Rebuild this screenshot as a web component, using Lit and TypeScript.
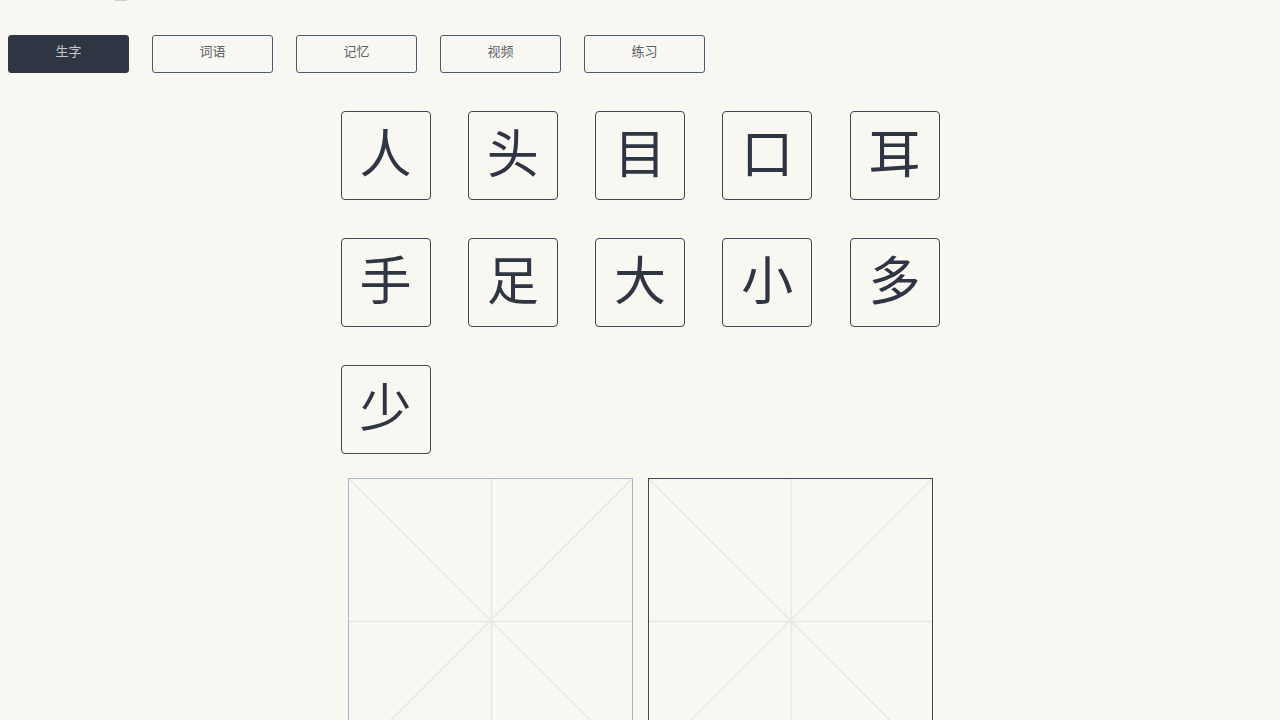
import { LitElement, html, css, svg } from "lit";
import { customElement, property, state } from "lit/decorators.js";
import { classMap } from "lit/directives/class-map.js";

const TABS = ["生字", "词语", "记忆", "视频", "练习"];
const CHARACTERS = ["人", "头", "目", "口", "耳", "手", "足", "大", "小", "多", "少"];

// Square practice sheet with a cross and two diagonals.
@customElement("writing-grid")
export class WritingGrid extends LitElement {
  static styles = css`
    :host {
      display: block;
      flex: 1;
    }
    .sheet {
      display: block;
      box-sizing: border-box;
      width: 100%;
      aspect-ratio: 1;
      border: 1px solid #3f4655;
    }
    .demo {
      border-color: #a9b7d3;
    }
    .guide {
      stroke: #e8e7e4;
      stroke-width: 1.5;
    }
  `;

  @property() kind = "practice";

  render() {
    const guides = [
      [0, 0, 284, 284],
      [284, 0, 0, 284],
      [143, 0, 143, 284],
      [0, 143, 284, 143],
    ];
    return html`<svg
      class=${classMap({ sheet: true, demo: this.kind === "demo" })}
      viewBox="0 0 284 284"
      aria-hidden="true"
    >
      ${guides.map(
        ([x1, y1, x2, y2]) => svg`<line class="guide" x1=${x1} y1=${y1} x2=${x2} y2=${y2}></line>`
      )}
    </svg>`;
  }
}

@customElement("app-root")
export class AppRoot extends LitElement {
  static styles = css`
    :host {
      display: block;
      box-sizing: border-box;
      min-height: 100vh;
      background: #f8f7f2;
      color: #2f3542;
      font-family: "Kaiti SC", KaiTi, STKaiti, "AR PL UKai CN", "Noto Sans CJK SC", sans-serif;
    }
    .rule {
      width: 12px;
      height: 1px;
      margin-left: 115px;
      background: #cfcecb;
    }
    .tabs {
      display: flex;
      flex-wrap: wrap;
      gap: 23px;
      padding: 34px 8px 0;
    }
    button {
      box-sizing: border-box;
      margin: 0;
      background: transparent;
      color: inherit;
      font-family: inherit;
      font-weight: 400;
      cursor: pointer;
    }
    .tab {
      width: 121px;
      height: 38px;
      padding: 0 0 6px;
      border: 1px solid #4b5b73;
      border-radius: 3px;
      color: #5a5f68;
      font-size: 13px;
      line-height: 20px;
    }
    .active {
      border-color: #2f3542;
      background: #2f3542;
      color: #c6c8ca;
    }
    .cards {
      display: grid;
      grid-template-columns: repeat(5, 90px);
      justify-content: space-between;
      row-gap: 38px;
      max-width: 599px;
      margin: 38px auto 0;
    }
    .card {
      height: 89px;
      padding: 0 0 10px;
      border: 1px solid #3f4552;
      border-radius: 4px;
      font-size: 52px;
      line-height: 76px;
    }
    .sheets {
      display: flex;
      gap: 15px;
      max-width: 585px;
      margin: 24px auto 0;
    }
  `;

  @state() private tab = "生字";

  render() {
    return html`
      <div class="rule"></div>
      <nav class="tabs">
        ${TABS.map(
          (name) => html`<button
            class=${classMap({ tab: true, active: name === this.tab })}
            @click=${() => (this.tab = name)}
          >${name}</button>`
        )}
      </nav>
      <main>
        <div class="cards">
          ${CHARACTERS.map((c) => html`<button class="card">${c}</button>`)}
        </div>
        <div class="sheets">
          <writing-grid kind="demo"></writing-grid>
          <writing-grid></writing-grid>
        </div>
      </main>
    `;
  }
}
